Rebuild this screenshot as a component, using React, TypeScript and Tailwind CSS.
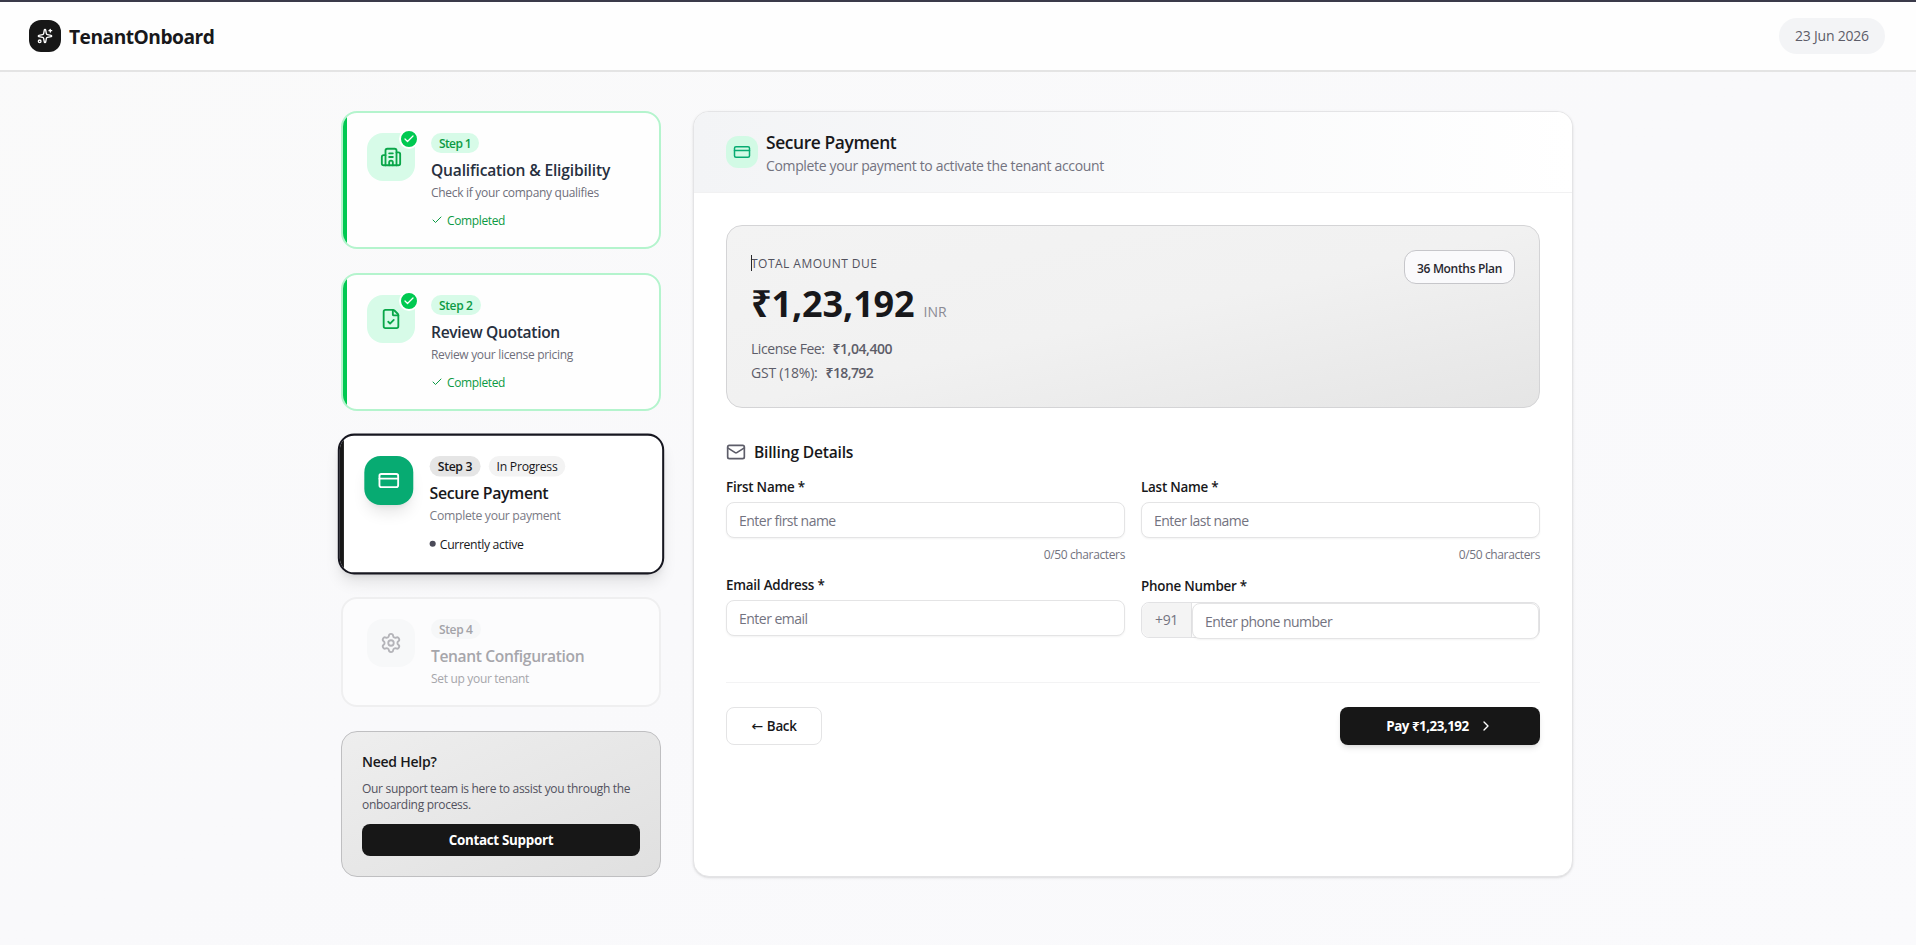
import type { ReactNode } from "react";
import {
  Building2,
  Check,
  ChevronRight,
  CreditCard,
  FileCheck,
  Mail,
  Settings,
  Sparkles,
} from "lucide-react";

function Header() {
  return (
    <header className="flex h-[72px] items-center justify-between border-t-2 border-b-2 border-t-[#3a3a4a] border-b-[#e4e4e4] bg-[#fefefe] pr-[31px] pl-[29px]">
      <div className="flex items-center gap-2">
        <div className="flex size-8 items-center justify-center rounded-xl bg-[#171717] text-white">
          <Sparkles className="size-4" />
        </div>
        <span className="pt-0.5 text-[19.2px] leading-7 font-bold tracking-[-0.5px] text-[#18181b]">
          TenantOnboard
        </span>
      </div>
      <div className="flex h-9 w-[106px] items-center justify-center rounded-full bg-[#f3f4f6] text-sm tracking-[-0.22px] text-[#5d5d69]">
        23 Jun 2026
      </div>
    </header>
  );
}

type DoneStepProps = {
  icon: ReactNode;
  step: ReactNode;
  title: ReactNode;
  description: ReactNode;
};

function DoneStep({ icon, step, title, description }: DoneStepProps) {
  return (
    <div className="flex h-[138px] overflow-hidden rounded-2xl border-2 border-[#b4f4cd] bg-[#fefefe]">
      <div className="w-1 shrink-0 bg-[#00c951]" />
      <div className="flex gap-4 pt-5 pl-5">
        <div className="relative flex size-12 items-center justify-center rounded-2xl bg-[#d7fbe8] text-[#0aa649]">
          {icon}
          <span className="absolute -top-1 -right-1 flex size-5 items-center justify-center rounded-full border-2 border-white bg-[#00c951] text-white">
            <Check className="size-3" strokeWidth={2.5} />
          </span>
        </div>
        <div className="flex flex-col items-start">
          {step}
          {title}
          {description}
          <div className="mt-3 flex items-center gap-1 text-xs tracking-[-0.37px] text-[#0c9a44]">
            <Check className="mb-0.5 size-3" />
            Completed
          </div>
        </div>
      </div>
    </div>
  );
}

const pillClass = "flex h-5 items-center rounded-full px-2 pt-0.5 text-xs";
const donePill = `${pillClass} bg-[#d7fbe8] font-semibold text-[#0c9a44]`;
const titleClass = "mt-[5px] text-[15.6px] leading-6 font-semibold";
const descriptionClass = "mt-[3px] text-xs";

function ActiveStep() {
  return (
    <div className="flex h-[138px] scale-[1.02] overflow-hidden rounded-2xl border-2 border-[#171720] bg-white shadow-lg">
      <div className="w-1 shrink-0 bg-[#171717]" />
      <div className="flex gap-4 pt-5 pl-5">
        <div className="flex size-12 items-center justify-center rounded-2xl bg-[#07ab72] text-white shadow-lg">
          <CreditCard className="size-[22px]" />
        </div>
        <div className="flex flex-col items-start">
          <div className="flex gap-2">
            <span
              className={`${pillClass} bg-[#e5e5e5] font-semibold tracking-[-0.34px] text-[#18181b]`}
            >
              Step 3
            </span>
            <span className={`${pillClass} bg-[#f3f3f3] tracking-[-0.28px] text-[#18181b]`}>
              In Progress
            </span>
          </div>
          <h3 className="mt-1 text-[15.6px] leading-6 font-semibold tracking-[-0.4px] text-[#18181b]">
            Secure Payment
          </h3>
          <p className={`${descriptionClass} tracking-[-0.33px] text-[#7a7a85]`}>
            Complete your payment
          </p>
          <div className="mt-3 flex items-center gap-1 text-xs tracking-[-0.36px] text-[#18181b]">
            <span className="mb-0.5 size-1.5 rounded-full bg-[#4a4a58]" />
            Currently active
          </div>
        </div>
      </div>
    </div>
  );
}

function PendingStep() {
  return (
    <div className="flex h-[110px] rounded-2xl border-2 border-[#efeff0] bg-[#fcfcfd] pt-5 pl-6">
      <div className="flex gap-4">
        <div className="flex size-12 items-center justify-center rounded-2xl bg-[#f7f8f9] text-[#b4b4b9]">
          <Settings className="size-[22px]" />
        </div>
        <div className="flex flex-col items-start">
          <span
            className={`${pillClass} bg-[#f6f7f8] font-semibold tracking-[-0.37px] text-[#a3a3a8]`}
          >
            Step 4
          </span>
          <h3 className={`${titleClass} tracking-[-0.36px] text-[#a6a6ab]`}>
            Tenant Configuration
          </h3>
          <p className={`${descriptionClass} tracking-[-0.32px] text-[#a6a6ab]`}>
            Set up your tenant
          </p>
        </div>
      </div>
    </div>
  );
}

function HelpCard() {
  return (
    <div className="flex h-[146px] flex-col rounded-2xl border border-[#bfbfc1] bg-linear-to-br from-[#eeeeee] to-[#e0e0e0] p-5">
      <h4 className="text-sm font-semibold tracking-[-0.25px] text-[#18181b]">Need Help?</h4>
      <p className="mt-[9px] text-xs leading-4 tracking-[-0.31px] text-[#52525e]">
        Our support team is here to assist you through the
        <br />
        onboarding process.
      </p>
      <button className="mt-[11px] flex h-8 items-center justify-center rounded-lg bg-[#171717] text-[13.4px] font-bold tracking-[-0.3px] text-white">
        Contact Support
      </button>
    </div>
  );
}

function AmountCard() {
  return (
    <div className="flex h-[183px] items-start justify-between rounded-2xl border border-[#d4d4d6] bg-linear-to-br from-[#f3f3f3] via-[#f1f1f1] to-[#e5e5e5] p-6">
      <div>
        <div className="relative mt-[5px] text-xs leading-[18px] tracking-[0.47px] text-[#52525e]">
          <span className="absolute top-0 left-0 h-4 w-px bg-[#27272a]" />
          TOTAL AMOUNT DUE
        </div>
        <div className="mt-[11px] flex items-baseline gap-[9px]">
          <span className="text-[36px] leading-10 font-bold tracking-[-0.12px] text-[#18181b]">
            ₹1,23,192
          </span>
          <span className="text-sm text-[#8a8a94]">INR</span>
        </div>
        <div className="mt-[15px] flex flex-col gap-1 text-sm text-[#5d5d69]">
          <div className="flex gap-2">
            <span className="tracking-[-0.44px]">License Fee:</span>
            <span className="font-semibold tracking-[-0.46px]">₹1,04,400</span>
          </div>
          <div className="flex gap-2">
            <span className="tracking-[-0.22px]">GST (18%):</span>
            <span className="font-semibold tracking-[-0.6px]">₹18,792</span>
          </div>
        </div>
      </div>
      <div className="flex h-[34px] w-[111px] items-center justify-center rounded-xl border border-[#c6c6ca] bg-[#fafafc] pt-1 text-xs font-semibold tracking-[-0.32px] text-[#27272f]">
        36 Months Plan
      </div>
    </div>
  );
}

const labelClass = "text-[13.4px] leading-5 font-semibold tracking-[-0.22px] text-[#18181b]";
const inputClass =
  "h-9 rounded-lg border border-[#e4e4e5] bg-white px-3 pt-px text-sm tracking-[-0.52px] text-[#18181b] shadow-xs outline-none placeholder:text-[#737380]";
const counterClass = "text-right text-xs tracking-[-0.37px] text-[#737380]";

function BillingForm() {
  return (
    <div className="grid grid-cols-2 gap-x-4">
      <div className="flex h-[98px] flex-col">
        <label className={labelClass}>First Name *</label>
        <input className={`${inputClass} mt-[5px] mb-[9px]`} placeholder="Enter first name" />
        <span className={counterClass}>0/50 characters</span>
      </div>
      <div className="flex h-[98px] flex-col">
        <label className={labelClass}>Last Name *</label>
        <input className={`${inputClass} mt-[5px] mb-[9px]`} placeholder="Enter last name" />
        <span className={counterClass}>0/50 characters</span>
      </div>
      <div className="flex flex-col">
        <label className={labelClass}>Email Address *</label>
        <input className={`${inputClass} mt-[5px]`} placeholder="Enter email" />
      </div>
      <div className="flex flex-col pt-px">
        <label className={labelClass}>Phone Number *</label>
        <div className="mt-1.5 flex h-9 rounded-lg border border-[#e2e2e4] bg-white">
          <span className="flex w-[50px] shrink-0 items-center justify-center rounded-l-lg border-r border-[#e2e2e4] bg-[#f4f4f4] text-sm tracking-[-0.3px] text-[#737380]">
            +91
          </span>
          <input className={`${inputClass} min-w-0 flex-1`} placeholder="Enter phone number" />
        </div>
      </div>
    </div>
  );
}

function PaymentPanel() {
  return (
    <section className="flex h-[766px] flex-1 flex-col overflow-hidden rounded-2xl border border-[#e4e4e6] bg-white shadow-sm">
      <div className="flex h-[81px] items-center gap-2 border-b border-[#f1f1f2] bg-linear-to-r from-[#f3f4f6] to-white pl-8">
        <div className="flex size-8 items-center justify-center rounded-xl bg-[#d2fae5] text-[#07ab72]">
          <CreditCard className="size-[18px]" />
        </div>
        <div className="flex flex-col pt-[3px]">
          <h2 className="text-[17.4px] leading-[23px] font-semibold tracking-[-0.4px] text-[#18181b]">
            Secure Payment
          </h2>
          <p className="text-sm leading-[23px] tracking-[-0.35px] text-[#737380]">
            Complete your payment to activate the tenant account
          </p>
        </div>
      </div>
      <div className="px-8 pt-8">
        <AmountCard />
        <div className="mt-8 flex h-6 items-center gap-2">
          <Mail className="size-5 text-[#5d5d69]" />
          <h3 className="text-[15.6px] leading-6 font-semibold tracking-[-0.2px] text-[#18181b]">
            Billing Details
          </h3>
        </div>
        <div className="mt-[13px]">
          <BillingForm />
        </div>
        <div className="mt-11 flex items-start justify-between border-t border-[#f3f3f4] pt-6">
          <button className="flex h-[38px] w-24 items-center justify-center gap-1 rounded-lg border border-[#e4e4e5] bg-white text-[13.4px] font-semibold tracking-[-0.3px] text-[#18181b]">
            <span className="font-['DejaVu_Sans'] text-[14px] leading-5 font-normal">←</span>
            Back
          </button>
          <button className="flex h-[38px] w-[200px] items-center justify-center gap-[9px] rounded-lg bg-[#171717] text-[13.4px] font-bold tracking-[-0.5px] text-white shadow-md">
            Pay ₹1,23,192
            <ChevronRight className="size-4" />
          </button>
        </div>
      </div>
    </section>
  );
}

export default function App() {
  return (
    <div className="h-[945px] overflow-hidden bg-linear-to-br from-[#fafafa] via-[#f9f9fb] to-[#fafafc] font-['Open_Sans','Noto_Sans',sans-serif]">
      <Header />
      <main className="flex items-start gap-8 pt-[39px] pr-[343px] pl-[341px]">
        <aside className="flex w-80 shrink-0 flex-col gap-6">
          <DoneStep
            icon={<Building2 className="size-[22px]" />}
            step={<span className={`${donePill} tracking-[-0.62px]`}>Step 1</span>}
            title={
              <h3 className={`${titleClass} tracking-[-0.18px] text-[#27303f]`}>
                Qualification &amp; Eligibility
              </h3>
            }
            description={
              <p className={`${descriptionClass} tracking-[-0.3px] text-[#6f6f7b]`}>
                Check if your company qualifies
              </p>
            }
          />
          <DoneStep
            icon={<FileCheck className="size-[22px]" />}
            step={<span className={`${donePill} tracking-[-0.37px]`}>Step 2</span>}
            title={
              <h3 className={`${titleClass} tracking-[-0.33px] text-[#27303f]`}>
                Review Quotation
              </h3>
            }
            description={
              <p className={`${descriptionClass} tracking-[-0.31px] text-[#6f6f7b]`}>
                Review your license pricing
              </p>
            }
          />
          <ActiveStep />
          <PendingStep />
          <HelpCard />
        </aside>
        <PaymentPanel />
      </main>
    </div>
  );
}
